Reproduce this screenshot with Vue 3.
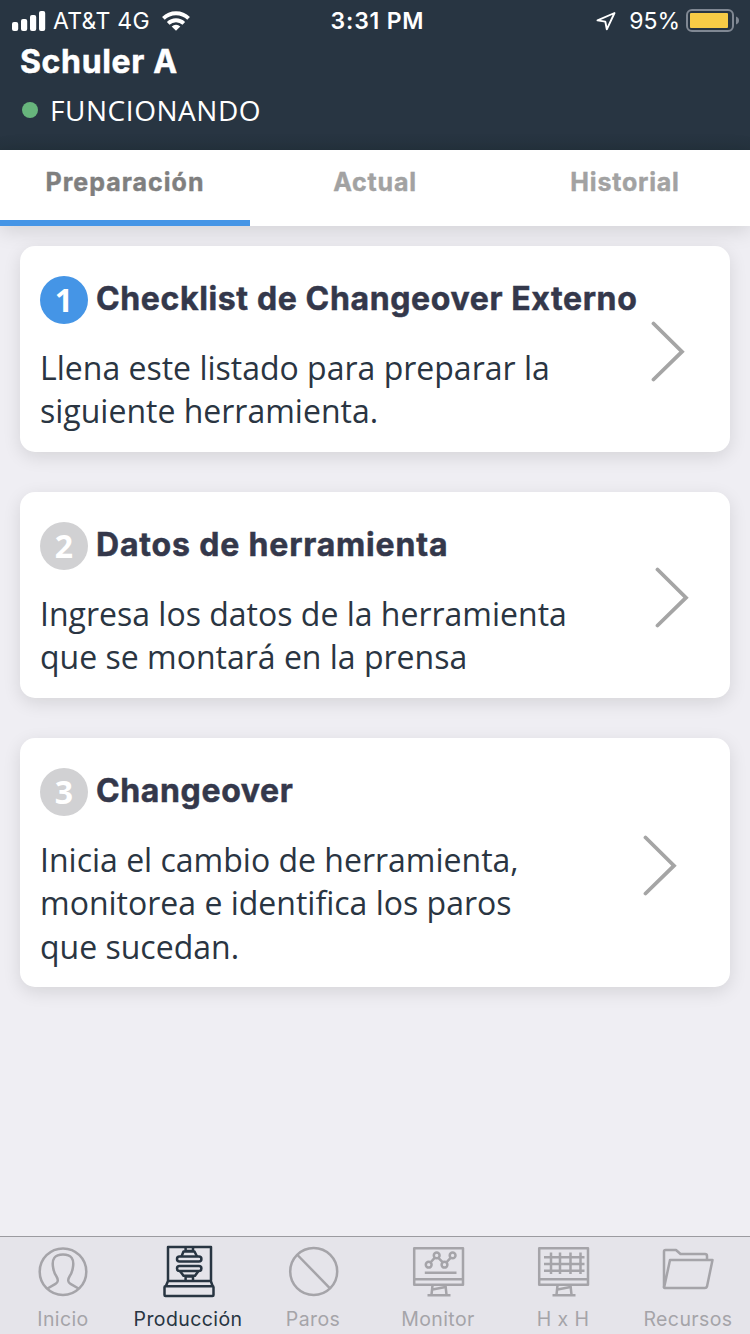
<script setup>
const tabs = [
  { id: 'prep', label: 'Preparación', active: true },
  { id: 'actual', label: 'Actual' },
  { id: 'hist', label: 'Historial' },
]

const steps = [
  {
    id: 'one', n: 1, active: true, title: 'Checklist de Changeover Externo',
    lines: ['Llena este listado para preparar la', 'siguiente herramienta.'],
  },
  {
    id: 'two', n: 2, title: 'Datos de herramienta',
    lines: ['Ingresa los datos de la herramienta', 'que se montará en la prensa'],
  },
  {
    id: 'three', n: 3, title: 'Changeover',
    lines: ['Inicia el cambio de herramienta,', 'monitorea e identifica los paros', 'que sucedan.'],
  },
]

const nav = [
  { id: 'inicio', label: 'Inicio' },
  { id: 'produccion', label: 'Producción', active: true },
  { id: 'paros', label: 'Paros' },
  { id: 'monitor', label: 'Monitor' },
  { id: 'hxh', label: 'H x H' },
  { id: 'recursos', label: 'Recursos' },
]
</script>

<template>
  <div class="screen">
    <header class="header">
      <div class="status">
        <div class="status-left">
          <svg class="signal" width="34" height="20" viewBox="0 0 34 20" fill="#fff">
            <rect x="0" y="11" width="6.2" height="9" rx="2" />
            <rect x="9" y="8" width="6.2" height="12" rx="2" />
            <rect x="18" y="4" width="6.2" height="16" rx="2" />
            <rect x="27" y="0" width="6.2" height="20" rx="2" />
          </svg>
          <span class="carrier">AT&amp;T 4G</span>
          <svg class="wifi" width="28" height="20" viewBox="0 0 28 20" fill="none" stroke="#fff" stroke-width="3.8">
            <path d="M1.4 7.4a18 18 0 0 1 25.2 0" />
            <path d="M6.2 12.4a11.2 11.2 0 0 1 15.6 0" />
            <path d="M14 19.7l-4.3-4.3a6.1 6.1 0 0 1 8.6 0z" fill="#fff" stroke="none" />
          </svg>
        </div>
        <span class="clock">3:31 PM</span>
        <div class="status-right">
          <svg width="20" height="20" viewBox="0 0 20 20" fill="none" stroke="#fff" stroke-width="1.9" stroke-linejoin="round">
            <path d="M18.5 2L1.5 9.4L9.3 10.6L10.8 18.3z" />
          </svg>
          <span class="percent">95%</span>
          <svg width="54" height="24" viewBox="0 0 54 24">
            <rect x="1" y="1" width="46" height="21" rx="5" fill="none" stroke="#808893" stroke-width="2" />
            <rect x="4" y="4" width="38" height="15" rx="1" fill="#f7cc46" />
            <path d="M50 7.5q3 1.2 3 4t-3 4z" fill="#808893" />
          </svg>
        </div>
      </div>
      <h1 class="machine">Schuler A</h1>
      <div class="state"><i class="dot"></i><span class="state-text">FUNCIONANDO</span></div>
    </header>

    <nav class="tabs">
      <div v-for="t in tabs" :key="t.id" class="tab" :class="[t.id, { active: t.active }]">
        <span>{{ t.label }}</span>
      </div>
    </nav>

    <main class="cards">
      <section v-for="s in steps" :key="s.n" class="card" :class="s.id">
        <div class="card-body">
          <div class="card-head">
            <span class="badge" :class="{ on: s.active }">{{ s.n }}</span>
            <h2 class="card-title">{{ s.title }}</h2>
          </div>
          <p class="desc"><span v-for="l in s.lines" :key="l" class="line">{{ l }}</span></p>
        </div>
        <svg class="chevron" width="34" height="62" viewBox="0 0 34 62" fill="none" stroke="#a5a5a5" stroke-width="3.8" stroke-linecap="round" stroke-linejoin="miter">
          <path d="M2.5 2.5L31 30.7L2.5 58.5" />
        </svg>
      </section>
    </main>

    <footer class="bottom">
      <div v-for="n in nav" :key="n.id" class="item" :class="[n.id, { active: n.active }]">
        <svg class="icon" width="54" height="54" viewBox="0 0 54 54" fill="none" stroke="currentColor" stroke-width="2.5" stroke-linejoin="round">
          <template v-if="n.id === 'inicio'">
            <circle cx="27" cy="26.7" r="23.3" />
            <path d="M11.5 43.5L19.5 38.8Q23.5 36.5 20.5 31.5Q18 28 17.200 23Q14.500 9.500 27 9.500T36.800 23Q36 28 33.500 31.500Q30.500 36.500 34.500 38.800L42.500 43.500" />
          </template>
          <template v-else-if="n.id === 'produccion'">
            <path d="M7 35.5V2H50V35.5M4.8 41.2L7 36H49.8L51.7 41.2" />
            <rect x="3.5" y="41.2" width="49" height="9.8" rx="1" />
            <path d="M24.6 2.5V6H32V2.5M20.5 11.5L22.5 6.5H33.5L36 11.500M24.600 35V31.500H32V35M19 26L22.500 30.800H34L37.500 26" />
            <rect x="16" y="11.5" width="24.4" height="5" rx="2.5" />
            <rect x="16" y="21" width="24.4" height="5" rx="2.5" />
          </template>
          <template v-else-if="n.id === 'paros'">
            <circle cx="27.7" cy="26.5" r="23.5" />
            <path d="M11.5 10L43.5 42.8" />
          </template>
          <template v-else-if="n.id === 'recursos'">
            <path d="M3 43V6.5Q3 5 4.5 5H15L19.5 9H44Q46 9 46 11V14M3 43L9 15H51.5L46 41.5Q45.500 43 44 43H3.500Q2.500 43 3 41" />
          </template>
          <template v-else>
            <path d="M3.2 3.2H52V39.8H3.2zM3.2 34.3H52M21.5 40.5L20.5 49.6M34.5 40.5L35.5 49.6M21.5 44.5L34.5 42M16.5 50.2H39.5" />
            <template v-if="n.id === 'monitor'">
              <circle cx="17.7" cy="19.7" r="2.9" />
              <circle cx="25.7" cy="10.4" r="2.9" />
              <circle cx="33.5" cy="19.7" r="2.9" />
              <circle cx="41.6" cy="10.4" r="2.9" />
              <path d="M19.5 17.5L23.8 12.7M27.4 12.9L31.8 17.3M35.3 17.5L39.8 12.7M13.8 27.8H45.5" />
            </template>
            <path v-else d="M8 12.2H48.5M8 19H48.5M8 25.8H48.5M15 7.5V29M24 7.5V29M34.5 7.5V29M44.5 7.5V29" />
          </template>
        </svg>
        <span class="label">{{ n.label }}</span>
      </div>
    </footer>
  </div>
</template>

<style>
body {
  margin: 0;
}
</style>

<style scoped>
.screen {
  width: 750px;
  height: 1334px;
  display: flex;
  flex-direction: column;
  overflow: hidden;
  background: #efeef3;
  font-family: "Open Sans", "Liberation Sans", sans-serif;
  color: #2a3542;
}
.header {
  height: 150px;
  background: linear-gradient(#283542 90%, #24323d);
  color: #fff;
}
.status {
  height: 41px;
  box-sizing: border-box;
  padding: 0 10px 0 12px;
  display: grid;
  grid-template-columns: 1fr auto 1fr;
  align-items: center;
  font: 23px/41px Inter, sans-serif;
}
.status-left,
.status-right {
  display: flex;
  align-items: center;
}
.status-right {
  justify-content: flex-end;
}
.carrier {
  margin: 1px 12px 0 7px;
  letter-spacing: 0.3px;
}
.clock {
  margin-top: 1px;
  padding-left: 3px;
  font-weight: 600;
  letter-spacing: 0.8px;
}
.percent {
  margin: 1px 6px 0 13px;
}
.machine {
  margin: 0;
  padding-left: 20px;
  height: 42px;
  font: 700 32px/42px Inter, sans-serif;
  letter-spacing: 0.65px;
  -webkit-text-stroke: 0.5px currentColor;
}
.state {
  height: 54px;
  padding-left: 22px;
  display: flex;
  align-items: center;
}
.dot {
  width: 16px;
  height: 16px;
  border-radius: 50%;
  background: #67b57c;
}
.state-text {
  margin-left: 12px;
  font-size: 28px;
  line-height: 54px;
  letter-spacing: 0.55px;
}
.tabs {
  position: relative;
  display: grid;
  grid-template-columns: repeat(3, 1fr);
  height: 76px;
  background: #fff;
  box-shadow: 0 4px 20px rgba(0, 0, 0, 0.13);
}
.tab {
  box-sizing: border-box;
  height: 76px;
  text-align: center;
  font: 700 25px/64px Inter, sans-serif;
  letter-spacing: 0.8px;
  -webkit-text-stroke: 0.4px currentColor;
  color: #a2a2a2;
}
.tab.active {
  color: #7f7f7f;
  letter-spacing: 1px;
  border-bottom: 6px solid #4595e6;
}
.cards {
  flex: 1;
  padding: 20px;
  display: flex;
  flex-direction: column;
  gap: 40px;
}
.card {
  box-sizing: border-box;
  height: 206px;
  padding: 30px 0 0 20px;
  border-radius: 15px;
  background: #fff;
  box-shadow: 0 5px 18px rgba(0, 0, 0, 0.11);
  display: flex;
  justify-content: space-between;
}
.card.three {
  height: 249px;
}
.card-head {
  display: flex;
  align-items: center;
  height: 48px;
  gap: 8px;
}
.badge {
  width: 48px;
  height: 48px;
  border-radius: 50%;
  background: #d1d1d3;
  color: #fff;
  text-align: center;
  font-size: 32px;
  line-height: 47px;
  font-weight: 700;
}
.badge.on {
  background: #4595e6;
}
.card-title {
  margin: 0;
  font: 700 32px/46px Inter, sans-serif;
  letter-spacing: 0.63px;
  -webkit-text-stroke: 0.5px currentColor;
  height: 48px;
  white-space: nowrap;
  color: #34384b;
}
.two .card-title {
  letter-spacing: 0.83px;
}
.desc {
  margin: 22px 0 0;
  font-size: 32px;
  line-height: 43.4px;
}
.line {
  display: block;
  white-space: nowrap;
}
.chevron {
  flex: none;
  margin-top: 45px;
  margin-right: 45px;
}
.two .chevron {
  margin-right: 41px;
}
.three .chevron {
  margin-top: 67px;
  margin-right: 53px;
}
.bottom {
  height: 98px;
  box-sizing: border-box;
  border-top: 1px solid #9b9ba0;
  background: #e5e4ea;
  display: grid;
  grid-template-columns: repeat(6, 1fr);
}
.item {
  display: flex;
  flex-direction: column;
  align-items: center;
  padding-top: 8px;
  color: #a5a4a9;
}
.item.active {
  color: #283542;
}
.label {
  font: 19.5px/24px Inter, sans-serif;
  margin-top: 8px;
  padding-left: 1px;
  letter-spacing: 0.4px;
  white-space: nowrap;
}
</style>
